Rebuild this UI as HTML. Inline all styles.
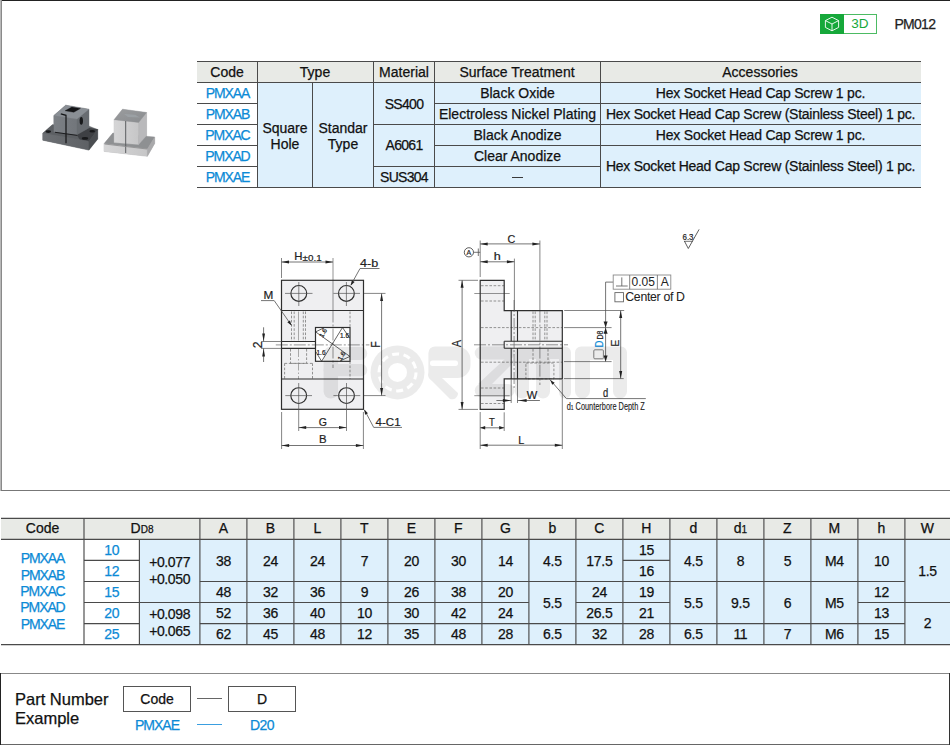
<!DOCTYPE html>
<html><head><meta charset="utf-8"><style>
html,body{margin:0;padding:0;background:#fff;}
body{width:950px;height:746px;position:relative;overflow:hidden;font-family:"Liberation Sans",sans-serif;}
body>div{position:absolute;}
.t{white-space:nowrap;-webkit-text-stroke:0.25px currentColor;}
</style></head><body>
<svg style="position:absolute;left:0;top:0" width="950" height="746" viewBox="0 0 950 746"><defs>
<linearGradient id="dkf" x1="0" y1="0" x2="1" y2="0"><stop offset="0" stop-color="#7c8085"/><stop offset="1" stop-color="#72767b"/></linearGradient>
<linearGradient id="dkfl" x1="0" y1="0" x2="1" y2="0"><stop offset="0" stop-color="#6c6f73"/><stop offset="1" stop-color="#5e6165"/></linearGradient>
<linearGradient id="ltf" x1="0" y1="0" x2="1" y2="0"><stop offset="0" stop-color="#d6d6d7"/><stop offset="1" stop-color="#c6c6c7"/></linearGradient>
<linearGradient id="ltt" x1="0" y1="0" x2="1" y2="1"><stop offset="0" stop-color="#9a9c9e"/><stop offset="1" stop-color="#8a8c8f"/></linearGradient>
</defs><polygon points="42.8,133.2 52.4,124.7 53.9,124.7 53.9,115.5 65.7,105.2 88.9,109.2 88.9,126 97.7,129.5 97.7,139.1 88.9,150.1 42.8,140.2" fill="#66696d" stroke="#66696d" stroke-width="0.3" stroke-linejoin="round"/><polygon points="42.8,133.2 52.4,124.7 97.7,129.5 88.9,141.3" fill="#5c5f63" stroke="#5c5f63" stroke-width="0.3" stroke-linejoin="round"/><polygon points="77,134.7 88.9,128 97.7,129.5 88.9,141.3 80,140" fill="#3e4044" stroke="#3e4044" stroke-width="0.3" stroke-linejoin="round"/><polygon points="42.8,133.2 88.9,141.3 88.9,150.1 42.8,140.2" fill="url(#dkfl)" stroke="url(#dkfl)" stroke-width="0.3" stroke-linejoin="round"/><polygon points="88.9,141.3 97.7,129.5 97.7,139.1 88.9,150.1" fill="#4a4d51" stroke="#4a4d51" stroke-width="0.3" stroke-linejoin="round"/><ellipse cx="48.3" cy="131.6" rx="2.8" ry="1.3" fill="#18191b"/><ellipse cx="92.2" cy="131.2" rx="2.8" ry="1.2" fill="#18191b"/><ellipse cx="85" cy="138.4" rx="3.2" ry="1.3" fill="#18191b"/><polygon points="53.9,115.5 77,119 77,134.7 53.9,131.7" fill="url(#dkf)" stroke="url(#dkf)" stroke-width="0.3" stroke-linejoin="round"/><polygon points="77,119 88.9,109.2 88.9,128 77,134.7" fill="#686c71" stroke="#686c71" stroke-width="0.3" stroke-linejoin="round"/><polygon points="53.9,115.5 65.7,105.2 88.9,109.2 77,119" fill="#8a8f95" stroke="#8a8f95" stroke-width="0.3" stroke-linejoin="round"/><polygon points="65,110.8 71.8,107 80.5,108.4 73.8,112.3" fill="#141517" stroke="#141517" stroke-width="0.3" stroke-linejoin="round"/><polyline points="60.8,113.9 66,115.3 66,143.2" fill="none" stroke="#141517" stroke-width="1.2"/><polyline points="55,132.3 77.3,135.4" fill="none" stroke="#1c1d1f" stroke-width="1"/><ellipse cx="81.3" cy="120.8" rx="1.7" ry="3.9" fill="#18191b"/><polygon points="104,143.8 112.9,133 114.1,133 114.1,119.7 122.5,109.2 146.6,112.5 146.6,137 154.7,137 154.7,143.4 147.4,156.3 104,151.4" fill="#b4b4b6" stroke="#b4b4b6" stroke-width="0.3" stroke-linejoin="round"/><polygon points="104,143.8 112.9,133 154.7,137 147.4,149" fill="#8e9092" stroke="#8e9092" stroke-width="0.3" stroke-linejoin="round"/><polygon points="104,143.8 147.4,149 147.4,156.3 104,151.4" fill="url(#ltf)" stroke="url(#ltf)" stroke-width="0.3" stroke-linejoin="round"/><polygon points="147.4,149 154.7,137 154.7,143.4 147.4,156.3" fill="#a9a9ab" stroke="#a9a9ab" stroke-width="0.3" stroke-linejoin="round"/><polygon points="114.1,119.7 138.6,122.5 138.6,144.6 114.1,142.6" fill="url(#ltf)" stroke="url(#ltf)" stroke-width="0.3" stroke-linejoin="round"/><polygon points="138.6,122.5 146.6,112.5 146.6,135.4 138.6,144.6" fill="#b9b9bb" stroke="#b9b9bb" stroke-width="0.3" stroke-linejoin="round"/><polygon points="114.1,119.7 122.5,109.2 146.6,112.5 138.6,122.5" fill="url(#ltt)" stroke="url(#ltt)" stroke-width="0.3" stroke-linejoin="round"/><polygon points="124,114 135,114.8 140,117.5 128,117" fill="#a2a8ae" opacity="0.6"/><line x1="125.7" y1="121" x2="125.7" y2="153" stroke="#5c5e60" stroke-width="1"/><polyline points="104.5,144 125.7,146.5 147,149" fill="none" stroke="#8a8a8c" stroke-width="0.8"/></svg>
<svg style="position:absolute;left:0;top:0" width="950" height="746" viewBox="0 0 950 746" font-family="Liberation Sans, sans-serif"><rect x="281.5" y="280.3" width="82" height="129" fill="#efeff1"/><rect x="315.5" y="327.5" width="34.5" height="33.8" fill="#fff"/><rect x="281.5" y="341.5" width="34" height="6.9" fill="#fafafa"/><line x1="291.5" y1="311.5" x2="291.5" y2="341" stroke="#7a7a7a" stroke-width="0.8" stroke-dasharray="2.6,1.6"/><line x1="294.2" y1="311.5" x2="294.2" y2="341" stroke="#7a7a7a" stroke-width="0.8" stroke-dasharray="2.6,1.6"/><line x1="303.3" y1="311.5" x2="303.3" y2="341" stroke="#7a7a7a" stroke-width="0.8" stroke-dasharray="2.6,1.6"/><line x1="305.5" y1="311.5" x2="305.5" y2="341" stroke="#7a7a7a" stroke-width="0.8" stroke-dasharray="2.6,1.6"/><line x1="298.5" y1="311.5" x2="298.5" y2="340.5" stroke="#777" stroke-width="0.6"/><line x1="298.5" y1="349" x2="298.5" y2="379" stroke="#777" stroke-width="0.6" stroke-dasharray="8,2,1.5,2"/><line x1="290.5" y1="349" x2="290.5" y2="363.4" stroke="#7a7a7a" stroke-width="0.8" stroke-dasharray="2.6,1.6"/><line x1="306.6" y1="349" x2="306.6" y2="363.4" stroke="#7a7a7a" stroke-width="0.8" stroke-dasharray="2.6,1.6"/><line x1="290.5" y1="363.4" x2="306.6" y2="363.4" stroke="#7a7a7a" stroke-width="0.8" stroke-dasharray="2.6,1.6"/><line x1="284.6" y1="363.4" x2="312.5" y2="363.4" stroke="#7a7a7a" stroke-width="0.8" stroke-dasharray="2.6,1.6"/><line x1="284.6" y1="363.4" x2="284.6" y2="379" stroke="#7a7a7a" stroke-width="0.8" stroke-dasharray="2.6,1.6"/><line x1="312.5" y1="363.4" x2="312.5" y2="379" stroke="#7a7a7a" stroke-width="0.8" stroke-dasharray="2.6,1.6"/><line x1="350" y1="311.5" x2="350" y2="327.5" stroke="#7a7a7a" stroke-width="0.8" stroke-dasharray="2.6,1.6"/><line x1="350" y1="361.3" x2="350" y2="379" stroke="#7a7a7a" stroke-width="0.8" stroke-dasharray="2.6,1.6"/><line x1="333" y1="258" x2="333" y2="310.5" stroke="#666" stroke-width="0.7"/><line x1="333" y1="310.5" x2="333" y2="368" stroke="#666" stroke-width="0.7" stroke-dasharray="12,2,2,2"/><line x1="275.8" y1="344.9" x2="369.4" y2="344.9" stroke="#666" stroke-width="0.7" stroke-dasharray="12,2,2,2"/><rect x="281.5" y="280.3" width="82" height="129" fill="none" stroke="#2e2e2e" stroke-width="1.2"/><line x1="281.5" y1="310.5" x2="363.5" y2="310.5" stroke="#2e2e2e" stroke-width="1.2"/><line x1="281.5" y1="379" x2="363.5" y2="379" stroke="#2e2e2e" stroke-width="1.2"/><line x1="281.5" y1="341.5" x2="315.5" y2="341.5" stroke="#2e2e2e" stroke-width="1.1"/><line x1="281.5" y1="348.4" x2="315.5" y2="348.4" stroke="#2e2e2e" stroke-width="1.1"/><rect x="315.5" y="327.5" width="34.5" height="33.8" fill="none" stroke="#2e2e2e" stroke-width="1.2"/><circle cx="298.8" cy="293.4" r="7.9" fill="none" stroke="#2e2e2e" stroke-width="1.15"/><circle cx="346.4" cy="293.4" r="7.9" fill="none" stroke="#2e2e2e" stroke-width="1.15"/><circle cx="298.7" cy="395.6" r="7.9" fill="none" stroke="#2e2e2e" stroke-width="1.15"/><circle cx="346.5" cy="395.6" r="7.9" fill="none" stroke="#2e2e2e" stroke-width="1.15"/><line x1="285" y1="293.4" x2="312.5" y2="293.4" stroke="#555" stroke-width="0.7"/><line x1="333.4" y1="293.4" x2="360" y2="293.4" stroke="#555" stroke-width="0.7"/><line x1="298.8" y1="282" x2="298.8" y2="306" stroke="#555" stroke-width="0.7"/><line x1="346.4" y1="282" x2="346.4" y2="306" stroke="#555" stroke-width="0.7"/><line x1="285.3" y1="395.6" x2="312" y2="395.6" stroke="#555" stroke-width="0.7"/><line x1="333.4" y1="395.6" x2="360.3" y2="395.6" stroke="#555" stroke-width="0.7"/><line x1="298.7" y1="383" x2="298.7" y2="431" stroke="#555" stroke-width="0.7"/><line x1="346.5" y1="383" x2="346.5" y2="431" stroke="#555" stroke-width="0.7"/><line x1="342.5" y1="327.5" x2="321.6" y2="361.3" stroke="#222" stroke-width="0.7"/><line x1="315.5" y1="331.8" x2="350" y2="356.5" stroke="#222" stroke-width="0.7"/><polyline points="315.8,331.8 324,327.8" fill="none" stroke="#222" stroke-width="0.7"/><polyline points="342.5,327.5 349.7,338" fill="none" stroke="#222" stroke-width="0.7"/><polyline points="316,352 321.6,361.3" fill="none" stroke="#222" stroke-width="0.7"/><polyline points="349.7,356.5 340,361" fill="none" stroke="#222" stroke-width="0.7"/><text x="325" y="334" font-size="6.5" text-anchor="middle" fill="#222" stroke="#222" stroke-width="0.2" transform="rotate(-60 325 334)">1.6</text><text x="344.5" y="337.5" font-size="6.5" text-anchor="middle" fill="#222" stroke="#222" stroke-width="0.2">1.6</text><text x="321" y="355" font-size="6.5" text-anchor="middle" fill="#222" stroke="#222" stroke-width="0.2">1.6</text><text x="343.5" y="357" font-size="6.5" text-anchor="middle" fill="#222" stroke="#222" stroke-width="0.2" transform="rotate(-60 343.5 357)">1.6</text><line x1="281.5" y1="258" x2="281.5" y2="278" stroke="#505050" stroke-width="0.7"/><line x1="281.5" y1="262" x2="333" y2="262" stroke="#505050" stroke-width="0.8"/><polygon points="281.5,262 289.00,260.50 289.00,263.50" fill="#222"/><polygon points="333,262 325.50,263.50 325.50,260.50" fill="#222"/><text x="294.3" y="260.3" font-size="11.5" text-anchor="start" fill="#222" stroke="#222" stroke-width="0.2" textLength="8.2" lengthAdjust="spacingAndGlyphs">H</text><text x="302.6" y="260.6" font-size="8.8" text-anchor="start" fill="#222" stroke="#222" stroke-width="0.2" textLength="19" lengthAdjust="spacingAndGlyphs">±0.1</text><text x="360.0" y="266.7" font-size="11.5" text-anchor="start" fill="#222" stroke="#222" stroke-width="0.2" textLength="18.2" lengthAdjust="spacingAndGlyphs">4-b</text><line x1="360" y1="268.5" x2="379.5" y2="268.5" stroke="#505050" stroke-width="0.8"/><line x1="360" y1="268.5" x2="350.8" y2="285.2" stroke="#505050" stroke-width="0.8"/><polygon points="350.8,285.5 351.81,280.35 354.61,281.89" fill="#222"/><text x="263.4" y="298.8" font-size="11.5" text-anchor="start" fill="#222" stroke="#222" stroke-width="0.2" textLength="9.8" lengthAdjust="spacingAndGlyphs">M</text><line x1="261" y1="300.6" x2="274.2" y2="300.6" stroke="#505050" stroke-width="0.8"/><line x1="274.2" y1="300.6" x2="291.5" y2="325.4" stroke="#505050" stroke-width="0.8"/><polygon points="291.5,325.4 287.33,322.21 289.95,320.38" fill="#222"/><line x1="261" y1="341.5" x2="281.5" y2="341.5" stroke="#505050" stroke-width="0.7"/><line x1="261" y1="348.4" x2="281.5" y2="348.4" stroke="#505050" stroke-width="0.7"/><line x1="263.6" y1="327.3" x2="263.6" y2="341.5" stroke="#505050" stroke-width="0.8"/><line x1="263.6" y1="348.4" x2="263.6" y2="362" stroke="#505050" stroke-width="0.8"/><polygon points="263.6,341.2 262.20,333.50 265.00,333.50" fill="#222"/><polygon points="263.6,348.7 265.00,356.40 262.20,356.40" fill="#222"/><text x="261.9" y="344.8" font-size="12.5" text-anchor="middle" fill="#222" stroke="#222" stroke-width="0.2" transform="rotate(-90 261.9 344.8)" textLength="6.8" lengthAdjust="spacingAndGlyphs">2</text><line x1="364" y1="293.4" x2="385.5" y2="293.4" stroke="#505050" stroke-width="0.7"/><line x1="364" y1="395.6" x2="385.5" y2="395.6" stroke="#505050" stroke-width="0.7"/><line x1="381.6" y1="293.4" x2="381.6" y2="395.6" stroke="#505050" stroke-width="0.8"/><polygon points="381.6,293.4 383.10,300.90 380.10,300.90" fill="#222"/><polygon points="381.6,395.6 380.10,388.10 383.10,388.10" fill="#222"/><text x="379.9" y="344.4" font-size="12" text-anchor="middle" fill="#222" stroke="#222" stroke-width="0.2" transform="rotate(-90 379.9 344.4)" textLength="6.2" lengthAdjust="spacingAndGlyphs">F</text><line x1="298.7" y1="427.6" x2="346.5" y2="427.6" stroke="#505050" stroke-width="0.8"/><polygon points="298.7,427.6 306.20,426.10 306.20,429.10" fill="#222"/><polygon points="346.5,427.6 339.00,429.10 339.00,426.10" fill="#222"/><text x="322.8" y="426" font-size="11" text-anchor="middle" fill="#222" stroke="#222" stroke-width="0.2" textLength="8.2" lengthAdjust="spacingAndGlyphs">G</text><line x1="281.6" y1="412" x2="281.6" y2="449" stroke="#505050" stroke-width="0.7"/><line x1="363.4" y1="412" x2="363.4" y2="449" stroke="#505050" stroke-width="0.7"/><line x1="281.6" y1="445.5" x2="363.4" y2="445.5" stroke="#505050" stroke-width="0.8"/><polygon points="281.6,445.5 289.10,444.00 289.10,447.00" fill="#222"/><polygon points="363.4,445.5 355.90,447.00 355.90,444.00" fill="#222"/><text x="322.9" y="443.4" font-size="11" text-anchor="middle" fill="#222" stroke="#222" stroke-width="0.2" textLength="7.6" lengthAdjust="spacingAndGlyphs">B</text><text x="375.6" y="426.4" font-size="11.5" text-anchor="start" fill="#222" stroke="#222" stroke-width="0.2" textLength="25" lengthAdjust="spacingAndGlyphs">4-C1</text><line x1="373.7" y1="427.4" x2="402" y2="427.4" stroke="#505050" stroke-width="0.8"/><line x1="373.7" y1="427.4" x2="364.5" y2="410" stroke="#505050" stroke-width="0.8"/><polygon points="364.2,409.6 367.95,413.27 365.12,414.77" fill="#222"/><polygon points="480.2,280.3 504.2,280.3 504.2,310.6 562.3,310.6 562.3,378.9 504.2,378.9 504.2,409.4 480.2,409.4" fill="#efeff1"/><rect x="504.2" y="341.3" width="58.1" height="6.9" fill="#f4f4f5"/><line x1="481" y1="285.7" x2="504" y2="285.7" stroke="#7a7a7a" stroke-width="0.8" stroke-dasharray="2.6,1.6"/><line x1="481" y1="301" x2="504" y2="301" stroke="#7a7a7a" stroke-width="0.8" stroke-dasharray="2.6,1.6"/><line x1="481" y1="388" x2="504" y2="388" stroke="#7a7a7a" stroke-width="0.8" stroke-dasharray="2.6,1.6"/><line x1="481" y1="403.5" x2="504" y2="403.5" stroke="#7a7a7a" stroke-width="0.8" stroke-dasharray="2.6,1.6"/><line x1="481" y1="327.6" x2="562" y2="327.6" stroke="#7a7a7a" stroke-width="0.8" stroke-dasharray="2.6,1.6"/><line x1="481" y1="362.2" x2="562" y2="362.2" stroke="#7a7a7a" stroke-width="0.8" stroke-dasharray="2.6,1.6"/><line x1="533" y1="311.5" x2="533" y2="341" stroke="#7a7a7a" stroke-width="0.8" stroke-dasharray="2.6,1.6"/><line x1="535.2" y1="311.5" x2="535.2" y2="341" stroke="#7a7a7a" stroke-width="0.8" stroke-dasharray="2.6,1.6"/><line x1="544.8" y1="311.5" x2="544.8" y2="341" stroke="#7a7a7a" stroke-width="0.8" stroke-dasharray="2.6,1.6"/><line x1="547" y1="311.5" x2="547" y2="341" stroke="#7a7a7a" stroke-width="0.8" stroke-dasharray="2.6,1.6"/><line x1="533" y1="349" x2="533" y2="363" stroke="#7a7a7a" stroke-width="0.8" stroke-dasharray="2.6,1.6"/><line x1="548" y1="349" x2="548" y2="363" stroke="#7a7a7a" stroke-width="0.8" stroke-dasharray="2.6,1.6"/><rect x="525.9" y="363" width="28" height="15.9" fill="none" stroke="#7a7a7a" stroke-width="0.8" stroke-dasharray="2.6,1.6"/><line x1="474.3" y1="293.5" x2="509.7" y2="293.5" stroke="#666" stroke-width="0.7"/><line x1="474.3" y1="395.7" x2="509.7" y2="395.7" stroke="#666" stroke-width="0.7"/><line x1="474" y1="344.8" x2="568" y2="344.8" stroke="#666" stroke-width="0.7" stroke-dasharray="12,2,2,2"/><line x1="514.1" y1="300" x2="514.1" y2="390" stroke="#666" stroke-width="0.7" stroke-dasharray="12,2,2,2"/><line x1="539.9" y1="240.5" x2="539.9" y2="310.6" stroke="#505050" stroke-width="0.7"/><line x1="539.9" y1="310.6" x2="539.9" y2="385" stroke="#666" stroke-width="0.7" stroke-dasharray="12,2,2,2"/><polygon points="480.2,280.3 504.2,280.3 504.2,310.6 562.3,310.6 562.3,378.9 504.2,378.9 504.2,409.4 480.2,409.4" fill="none" stroke="#2e2e2e" stroke-width="1.2"/><line x1="511.2" y1="310.6" x2="511.2" y2="341.3" stroke="#2e2e2e" stroke-width="1.1"/><line x1="511.2" y1="348.2" x2="511.2" y2="378.9" stroke="#2e2e2e" stroke-width="1.1"/><line x1="517.5" y1="310.6" x2="517.5" y2="341.3" stroke="#2e2e2e" stroke-width="1.1"/><line x1="517.5" y1="348.2" x2="517.5" y2="378.9" stroke="#2e2e2e" stroke-width="1.1"/><line x1="504.2" y1="341.3" x2="562.3" y2="341.3" stroke="#2e2e2e" stroke-width="1.1"/><line x1="504.2" y1="348.2" x2="562.3" y2="348.2" stroke="#2e2e2e" stroke-width="1.1"/><line x1="504.2" y1="341.3" x2="504.2" y2="348.2" stroke="#2e2e2e" stroke-width="1.1"/><line x1="511.2" y1="379" x2="511.2" y2="403" stroke="#505050" stroke-width="0.7"/><line x1="517.5" y1="379" x2="517.5" y2="403" stroke="#505050" stroke-width="0.7"/><line x1="480.2" y1="240.5" x2="480.2" y2="277" stroke="#505050" stroke-width="0.7"/><line x1="480.2" y1="243.9" x2="539.9" y2="243.9" stroke="#505050" stroke-width="0.8"/><polygon points="480.2,243.9 487.70,242.40 487.70,245.40" fill="#222"/><polygon points="539.9,243.9 532.40,245.40 532.40,242.40" fill="#222"/><text x="511.5" y="242.7" font-size="11" text-anchor="middle" fill="#222" stroke="#222" stroke-width="0.2" textLength="7.8" lengthAdjust="spacingAndGlyphs">C</text><line x1="514.4" y1="258.6" x2="514.4" y2="310.6" stroke="#505050" stroke-width="0.7"/><line x1="480.2" y1="261.8" x2="514.4" y2="261.8" stroke="#505050" stroke-width="0.8"/><polygon points="480.2,261.8 487.70,260.30 487.70,263.30" fill="#222"/><polygon points="514.4,261.8 506.90,263.30 506.90,260.30" fill="#222"/><text x="497.2" y="260.4" font-size="11.5" text-anchor="middle" fill="#222" stroke="#222" stroke-width="0.2" textLength="7" lengthAdjust="spacingAndGlyphs">h</text><circle cx="468.9" cy="252.3" r="4.6" fill="none" stroke="#333" stroke-width="0.8"/><text x="468.9" y="255.2" font-size="7" text-anchor="middle" fill="#222" stroke="#222" stroke-width="0.2">A</text><line x1="473.5" y1="252.3" x2="480.2" y2="252.3" stroke="#505050" stroke-width="0.8"/><line x1="478.3" y1="248.5" x2="478.3" y2="256" stroke="#505050" stroke-width="0.8"/><line x1="458.5" y1="280.3" x2="478" y2="280.3" stroke="#505050" stroke-width="0.7"/><line x1="458.5" y1="409.4" x2="478" y2="409.4" stroke="#505050" stroke-width="0.7"/><line x1="462.1" y1="280.3" x2="462.1" y2="409.4" stroke="#505050" stroke-width="0.8"/><polygon points="462.1,280.3 463.60,287.80 460.60,287.80" fill="#222"/><polygon points="462.1,409.4 460.60,401.90 463.60,401.90" fill="#222"/><text x="460.9" y="343.5" font-size="12.2" text-anchor="middle" fill="#222" stroke="#222" stroke-width="0.2" transform="rotate(-90 460.9 343.5)" textLength="7.4" lengthAdjust="spacingAndGlyphs">A</text><line x1="496.4" y1="400.5" x2="511.2" y2="400.5" stroke="#505050" stroke-width="0.8"/><polygon points="510.9,400.5 502.90,402.00 502.90,399.00" fill="#222"/><line x1="517.5" y1="400.5" x2="539.9" y2="400.5" stroke="#505050" stroke-width="0.8"/><polygon points="518.6,400.5 526.60,399.00 526.60,402.00" fill="#222"/><text x="532.0" y="398.5" font-size="11.5" text-anchor="middle" fill="#222" stroke="#222" stroke-width="0.2" textLength="10.5" lengthAdjust="spacingAndGlyphs">W</text><line x1="504.2" y1="412.3" x2="504.2" y2="431" stroke="#505050" stroke-width="0.7"/><line x1="480.2" y1="412" x2="480.2" y2="449" stroke="#505050" stroke-width="0.7"/><line x1="480.2" y1="427.8" x2="504.2" y2="427.8" stroke="#505050" stroke-width="0.8"/><polygon points="480.2,427.8 485.20,426.00 485.20,429.60" fill="#222"/><polygon points="504.2,427.8 499.20,429.60 499.20,426.00" fill="#222"/><text x="491.8" y="425.6" font-size="10.5" text-anchor="middle" fill="#222" stroke="#222" stroke-width="0.2" textLength="5.8" lengthAdjust="spacingAndGlyphs">T</text><line x1="562.3" y1="380" x2="562.3" y2="449" stroke="#505050" stroke-width="0.7"/><line x1="480.2" y1="445.2" x2="562.3" y2="445.2" stroke="#505050" stroke-width="0.8"/><polygon points="480.2,445.2 487.70,443.70 487.70,446.70" fill="#222"/><polygon points="562.3,445.2 554.80,446.70 554.80,443.70" fill="#222"/><text x="521.3" y="443.7" font-size="11" text-anchor="middle" fill="#222" stroke="#222" stroke-width="0.2" textLength="6" lengthAdjust="spacingAndGlyphs">L</text><line x1="550.2" y1="379.9" x2="566.4" y2="398.6" stroke="#505050" stroke-width="0.8"/><polygon points="550.2,379.9 554.68,382.63 552.26,384.73" fill="#222"/><line x1="566.4" y1="398.6" x2="645.8" y2="398.6" stroke="#505050" stroke-width="0.8"/><text x="605.6" y="396.8" font-size="12" text-anchor="middle" fill="#222" stroke="#222" stroke-width="0.2" textLength="5.2" lengthAdjust="spacingAndGlyphs">d</text><text x="566.7" y="410.5" font-size="11.8" fill="#222" stroke="#222" stroke-width="0.15" transform="translate(566.7 0) scale(0.625 1) translate(-566.7 0)">d<tspan font-size="8">1</tspan> Counterbore Depth Z</text><line x1="564.2" y1="310.5" x2="624.2" y2="310.5" stroke="#505050" stroke-width="0.7"/><line x1="564" y1="327.6" x2="611.6" y2="327.6" stroke="#505050" stroke-width="0.7"/><line x1="564" y1="361.6" x2="611.6" y2="361.6" stroke="#505050" stroke-width="0.7"/><line x1="564" y1="378.6" x2="623.7" y2="378.6" stroke="#505050" stroke-width="0.7"/><line x1="620.7" y1="310.5" x2="620.7" y2="378.6" stroke="#505050" stroke-width="0.8"/><polygon points="620.7,310.5 622.20,318.00 619.20,318.00" fill="#222"/><polygon points="620.7,378.6 619.20,371.10 622.20,371.10" fill="#222"/><text x="618.9" y="343.0" font-size="11.8" text-anchor="middle" fill="#222" stroke="#222" stroke-width="0.2" transform="rotate(-90 618.9 343.0)" textLength="6.8" lengthAdjust="spacingAndGlyphs">E</text><line x1="605.6" y1="282.1" x2="613.2" y2="282.1" stroke="#505050" stroke-width="0.8"/><line x1="605.6" y1="282.1" x2="605.6" y2="361.6" stroke="#505050" stroke-width="0.8"/><polygon points="605.6,327.6 603.60,321.60 607.60,321.60" fill="#222"/><polygon points="605.6,327.8 607.60,333.80 603.60,333.80" fill="#222"/><polygon points="605.6,361.6 603.60,355.60 607.60,355.60" fill="#222"/><text x="602.9" y="344.1" font-size="11.8" text-anchor="middle" fill="#0b8ad6" stroke="#0b8ad6" stroke-width="0.2" transform="rotate(-90 602.9 344.1)" textLength="7" lengthAdjust="spacingAndGlyphs">D</text><text x="602.9" y="335.1" font-size="8.3" text-anchor="middle" fill="#222" stroke="#222" stroke-width="0.2" transform="rotate(-90 602.9 335.1)" textLength="8.8" lengthAdjust="spacingAndGlyphs">D8</text><rect x="593.8" y="349.8" width="9.6" height="9" rx="1" fill="none" stroke="#777" stroke-width="0.9"/><rect x="613.2" y="275" width="57.6" height="14.2" fill="#fff" stroke="#8a8a8a" stroke-width="0.9"/><line x1="629.7" y1="275" x2="629.7" y2="289.2" stroke="#777" stroke-width="0.9"/><line x1="657.4" y1="275" x2="657.4" y2="289.2" stroke="#777" stroke-width="0.9"/><line x1="616" y1="286" x2="627.7" y2="286" stroke="#666" stroke-width="0.9"/><line x1="621.8" y1="277.4" x2="621.8" y2="286" stroke="#666" stroke-width="0.9"/><text x="643.2" y="286.3" font-size="12" text-anchor="middle" fill="#222" stroke="#222" stroke-width="0">0.05</text><text x="664.8" y="286.3" font-size="12" text-anchor="middle" fill="#222" stroke="#222" stroke-width="0">A</text><rect x="614.9" y="292.6" width="8.6" height="9.2" fill="none" stroke="#666" stroke-width="0.9"/><text x="625.3" y="301.4" font-size="12.3" text-anchor="start" fill="#222" stroke="#222" stroke-width="0.05" letter-spacing="-0.32">Center of D</text><polyline points="684.3,240.9 688.3,248.5 699.1,229.4" fill="none" stroke="#333" stroke-width="0.8"/><line x1="684.3" y1="241.3" x2="692.7" y2="241.3" stroke="#333" stroke-width="0.7"/><text x="688" y="240" font-size="8.5" text-anchor="middle" fill="#222" stroke="#222" stroke-width="0.2" textLength="11" lengthAdjust="spacingAndGlyphs">6.3</text><defs><mask id="wmO" maskUnits="userSpaceOnUse" x="0" y="0" width="950" height="746"><rect x="0" y="0" width="950" height="746" fill="#fff"/><circle cx="397.5" cy="372.4" r="9.5" fill="#000"/><circle cx="397.5" cy="372.4" r="18.5" fill="none" stroke="#000" stroke-width="3" stroke-dasharray="7,4.6"/><rect x="430" y="360.6" width="28" height="5.3" rx="2.6" fill="#000"/></mask></defs><g fill="#000" opacity="0.075" mask="url(#wmO)"><rect x="323.6" y="347" width="14.5" height="51.5" rx="7"/><rect x="323.6" y="347" width="43.7" height="13" rx="6.5"/><rect x="323.6" y="364" width="43.7" height="12.2" rx="6"/><circle cx="397.5" cy="372.4" r="27"/><path d="M435 346.4 H457 A13.5 13.5 0 0 1 470.5 359.9 V365 A13 13 0 0 1 457.5 378 H442 L458 393 A6 6 0 0 1 450 399 L432 381 A8 8 0 0 1 428.4 372 V353 A6.6 6.6 0 0 1 435 346.4 Z"/><rect x="474.7" y="346.5" width="40" height="13" rx="6.5"/><path d="M508 356 L514 362 L486 390 L478 384 Z"/><rect x="474.7" y="384" width="40" height="13" rx="6.5"/><path d="M521 346.5 H565 A6 6 0 0 1 571 352.5 V392.5 A6 6 0 0 1 559 392.5 V359 H550 V391.5 A7 7 0 0 1 536 391.5 V359 H529 V391.5 A7 7 0 0 1 515 391.5 V352.5 A6 6 0 0 1 521 346.5 Z"/><path d="M581 346.5 H621 A6 6 0 0 1 627 352.5 V391.5 A7 7 0 0 1 613 391.5 V360 H590 V391 A7.5 7.5 0 0 1 575 391 V352.5 A6 6 0 0 1 581 346.5 Z"/></g></svg>
<div style="left:0px;top:0px;width:950px;height:1px;background:#222"></div><div style="left:0px;top:0px;width:1px;height:491px;background:#b8b8b8"></div><div style="left:1px;top:0px;width:1px;height:491px;background:#8a8a8a"></div><div style="left:1px;top:490px;width:949px;height:1px;background:#777"></div><div style="left:820px;top:14px;width:57px;height:20px;box-sizing:border-box;border:1px solid #4cbb63;background:#fff"></div><div style="left:820px;top:14px;width:23.5px;height:20px;background:#16a83a"></div><svg style="position:absolute;left:824px;top:16px" width="16" height="16" viewBox="0 0 16 16"><g fill="none" stroke="#fff" stroke-width="0.9" stroke-linejoin="round"><path d="M8 1.2 L14.6 4.6 L14.6 11.4 L8 14.8 L1.4 11.4 L1.4 4.6 Z"/><path d="M1.4 4.6 L8 8 L14.6 4.6 M8 8 L8 14.8"/></g></svg><div class="t" style="left:559.8px;width:600px;text-align:center;top:16.97px;font-size:13.5px;line-height:13.5px;color:#16a83a;-webkit-text-stroke:0;">3D</div><div class="t" style="left:894.4px;top:16.75px;font-size:14px;line-height:14px;color:#222;letter-spacing:-0.7px;">PM012</div><div style="left:197px;top:61px;width:724px;height:21px;background:#e8eae6"></div><div style="left:258px;top:83px;width:663px;height:104px;background:#def0fc"></div><div style="left:197px;top:61px;width:724px;height:1px;background:#4a4a4a"></div><div style="left:197px;top:82px;width:724px;height:1px;background:#4a4a4a"></div><div style="left:197px;top:187px;width:724px;height:1px;background:#4a4a4a"></div><div style="left:257px;top:61px;width:1px;height:126px;background:#4a4a4a"></div><div style="left:373px;top:61px;width:1px;height:126px;background:#4a4a4a"></div><div style="left:434px;top:61px;width:1px;height:126px;background:#4a4a4a"></div><div style="left:600px;top:61px;width:1px;height:126px;background:#4a4a4a"></div><div style="left:312px;top:82px;width:1px;height:105px;background:#4a4a4a"></div><div style="left:197px;top:103px;width:60px;height:1px;background:#4a4a4a"></div><div style="left:197px;top:124px;width:60px;height:1px;background:#4a4a4a"></div><div style="left:197px;top:145px;width:60px;height:1px;background:#4a4a4a"></div><div style="left:197px;top:166px;width:60px;height:1px;background:#4a4a4a"></div><div style="left:373px;top:124px;width:61px;height:1px;background:#4a4a4a"></div><div style="left:373px;top:166px;width:61px;height:1px;background:#4a4a4a"></div><div style="left:434px;top:103px;width:166px;height:1px;background:#4a4a4a"></div><div style="left:434px;top:124px;width:166px;height:1px;background:#4a4a4a"></div><div style="left:434px;top:145px;width:166px;height:1px;background:#4a4a4a"></div><div style="left:434px;top:166px;width:166px;height:1px;background:#4a4a4a"></div><div style="left:600px;top:103px;width:321px;height:1px;background:#4a4a4a"></div><div style="left:600px;top:124px;width:321px;height:1px;background:#4a4a4a"></div><div style="left:600px;top:145px;width:321px;height:1px;background:#4a4a4a"></div><div class="t" style="left:-73px;width:600px;text-align:center;top:64.65px;font-size:14px;line-height:14px;color:#111;">Code</div><div class="t" style="left:15px;width:600px;text-align:center;top:64.65px;font-size:14px;line-height:14px;color:#111;">Type</div><div class="t" style="left:104px;width:600px;text-align:center;top:64.65px;font-size:14px;line-height:14px;color:#111;">Material</div><div class="t" style="left:217px;width:600px;text-align:center;top:64.65px;font-size:14px;line-height:14px;color:#111;">Surface Treatment</div><div class="t" style="left:460px;width:600px;text-align:center;top:64.65px;font-size:14px;line-height:14px;color:#111;">Accessories</div><div class="t" style="left:-72.5px;width:600px;text-align:center;top:86.15px;font-size:14px;line-height:14px;color:#0b8ad6;letter-spacing:-1.1px;">PMXAA</div><div class="t" style="left:-72.5px;width:600px;text-align:center;top:107.15px;font-size:14px;line-height:14px;color:#0b8ad6;letter-spacing:-1.1px;">PMXAB</div><div class="t" style="left:-72.5px;width:600px;text-align:center;top:128.15px;font-size:14px;line-height:14px;color:#0b8ad6;letter-spacing:-1.1px;">PMXAC</div><div class="t" style="left:-72.5px;width:600px;text-align:center;top:149.15px;font-size:14px;line-height:14px;color:#0b8ad6;letter-spacing:-1.1px;">PMXAD</div><div class="t" style="left:-72.5px;width:600px;text-align:center;top:170.15px;font-size:14px;line-height:14px;color:#0b8ad6;letter-spacing:-1.1px;">PMXAE</div><div class="t" style="left:-15px;width:600px;text-align:center;top:120.75px;font-size:14px;line-height:14px;color:#111;">Square</div><div class="t" style="left:-15px;width:600px;text-align:center;top:137.25px;font-size:14px;line-height:14px;color:#111;">Hole</div><div class="t" style="left:43px;width:600px;text-align:center;top:120.75px;font-size:14px;line-height:14px;color:#111;">Standar</div><div class="t" style="left:43px;width:600px;text-align:center;top:137.25px;font-size:14px;line-height:14px;color:#111;">Type</div><div class="t" style="left:104px;width:600px;text-align:center;top:96.95px;font-size:14px;line-height:14px;color:#111;letter-spacing:-0.7px;">SS400</div><div class="t" style="left:104px;width:600px;text-align:center;top:138.15px;font-size:14px;line-height:14px;color:#111;letter-spacing:-0.7px;">A6061</div><div class="t" style="left:104px;width:600px;text-align:center;top:170.15px;font-size:14px;line-height:14px;color:#111;letter-spacing:-0.7px;">SUS304</div><div class="t" style="left:217.5px;width:600px;text-align:center;top:86.15px;font-size:14px;line-height:14px;color:#111;">Black Oxide</div><div class="t" style="left:217.5px;width:600px;text-align:center;top:107.15px;font-size:14px;line-height:14px;color:#111;">Electroless Nickel Plating</div><div class="t" style="left:217.5px;width:600px;text-align:center;top:128.15px;font-size:14px;line-height:14px;color:#111;">Black Anodize</div><div class="t" style="left:217.5px;width:600px;text-align:center;top:149.15px;font-size:14px;line-height:14px;color:#111;">Clear Anodize</div><div style="left:512px;top:177px;width:11px;height:1.4px;background:#3a3a3a"></div><div class="t" style="left:460.5px;width:600px;text-align:center;top:86.15px;font-size:14px;line-height:14px;color:#111;letter-spacing:-0.2px;">Hex Socket Head Cap Screw 1 pc.</div><div class="t" style="left:460.5px;width:600px;text-align:center;top:107.15px;font-size:14px;line-height:14px;color:#111;letter-spacing:-0.25px;">Hex Socket Head Cap Screw (Stainless Steel) 1 pc.</div><div class="t" style="left:460.5px;width:600px;text-align:center;top:128.15px;font-size:14px;line-height:14px;color:#111;letter-spacing:-0.2px;">Hex Socket Head Cap Screw 1 pc.</div><div class="t" style="left:460.5px;width:600px;text-align:center;top:159.15px;font-size:14px;line-height:14px;color:#111;letter-spacing:-0.25px;">Hex Socket Head Cap Screw (Stainless Steel) 1 pc.</div><div style="left:1px;top:518px;width:949px;height:21px;background:#e8eae6"></div><div style="left:139.5px;top:539.5px;width:810.5px;height:105px;background:#def0fc"></div><svg style="position:absolute;left:0;top:0" width="950" height="746"><g stroke="#4a4a4a" stroke-width="1.15"><line x1="1" y1="518.30" x2="950" y2="518.30"/><line x1="1" y1="539.35" x2="950" y2="539.35"/><line x1="1" y1="644.60" x2="950" y2="644.60"/><line x1="84.00" y1="518.30" x2="84.00" y2="644.60"/><line x1="139.40" y1="539.35" x2="139.40" y2="644.60"/><line x1="199.90" y1="518.30" x2="199.90" y2="644.60"/><line x1="246.90" y1="518.30" x2="246.90" y2="644.60"/><line x1="293.90" y1="518.30" x2="293.90" y2="644.60"/><line x1="340.90" y1="518.30" x2="340.90" y2="644.60"/><line x1="387.90" y1="518.30" x2="387.90" y2="644.60"/><line x1="434.90" y1="518.30" x2="434.90" y2="644.60"/><line x1="481.90" y1="518.30" x2="481.90" y2="644.60"/><line x1="528.90" y1="518.30" x2="528.90" y2="644.60"/><line x1="575.90" y1="518.30" x2="575.90" y2="644.60"/><line x1="622.90" y1="518.30" x2="622.90" y2="644.60"/><line x1="669.90" y1="518.30" x2="669.90" y2="644.60"/><line x1="716.90" y1="518.30" x2="716.90" y2="644.60"/><line x1="763.90" y1="518.30" x2="763.90" y2="644.60"/><line x1="810.90" y1="518.30" x2="810.90" y2="644.60"/><line x1="857.90" y1="518.30" x2="857.90" y2="644.60"/><line x1="904.90" y1="518.30" x2="904.90" y2="644.60"/><line x1="84.0" y1="560.40" x2="139.4" y2="560.40"/><line x1="84.0" y1="581.45" x2="139.4" y2="581.45"/><line x1="84.0" y1="602.50" x2="139.4" y2="602.50"/><line x1="84.0" y1="623.55" x2="139.4" y2="623.55"/><line x1="139.4" y1="602.50" x2="199.9" y2="602.50"/><line x1="199.9" y1="581.45" x2="528.9" y2="581.45"/><line x1="199.9" y1="602.50" x2="528.9" y2="602.50"/><line x1="199.9" y1="623.55" x2="528.9" y2="623.55"/><line x1="528.9" y1="581.45" x2="575.9" y2="581.45"/><line x1="528.9" y1="623.55" x2="575.9" y2="623.55"/><line x1="575.9" y1="581.45" x2="622.9" y2="581.45"/><line x1="575.9" y1="602.50" x2="622.9" y2="602.50"/><line x1="575.9" y1="623.55" x2="622.9" y2="623.55"/><line x1="622.9" y1="560.40" x2="669.9" y2="560.40"/><line x1="622.9" y1="581.45" x2="669.9" y2="581.45"/><line x1="622.9" y1="602.50" x2="669.9" y2="602.50"/><line x1="622.9" y1="623.55" x2="669.9" y2="623.55"/><line x1="669.9" y1="581.45" x2="857.9" y2="581.45"/><line x1="669.9" y1="623.55" x2="857.9" y2="623.55"/><line x1="857.9" y1="581.45" x2="904.9" y2="581.45"/><line x1="857.9" y1="602.50" x2="904.9" y2="602.50"/><line x1="857.9" y1="623.55" x2="904.9" y2="623.55"/><line x1="904.9" y1="602.50" x2="950" y2="602.50"/></g></svg><div class="t" style="left:-257.5px;width:600px;text-align:center;top:521.35px;font-size:14px;line-height:14px;color:#111;">Code</div><div class="t" style="left:84px;width:116px;text-align:center;top:521.35px;font-size:14px;line-height:14px;color:#111">D<span style="font-size:10px">D8</span></div><div class="t" style="left:-76.6px;width:600px;text-align:center;top:521.35px;font-size:14px;line-height:14px;color:#111;">A</div><div class="t" style="left:-29.600000000000023px;width:600px;text-align:center;top:521.35px;font-size:14px;line-height:14px;color:#111;">B</div><div class="t" style="left:17.399999999999977px;width:600px;text-align:center;top:521.35px;font-size:14px;line-height:14px;color:#111;">L</div><div class="t" style="left:64.39999999999998px;width:600px;text-align:center;top:521.35px;font-size:14px;line-height:14px;color:#111;">T</div><div class="t" style="left:111.39999999999998px;width:600px;text-align:center;top:521.35px;font-size:14px;line-height:14px;color:#111;">E</div><div class="t" style="left:158.39999999999998px;width:600px;text-align:center;top:521.35px;font-size:14px;line-height:14px;color:#111;">F</div><div class="t" style="left:205.39999999999998px;width:600px;text-align:center;top:521.35px;font-size:14px;line-height:14px;color:#111;">G</div><div class="t" style="left:252.39999999999998px;width:600px;text-align:center;top:521.35px;font-size:14px;line-height:14px;color:#111;">b</div><div class="t" style="left:299.4px;width:600px;text-align:center;top:521.35px;font-size:14px;line-height:14px;color:#111;">C</div><div class="t" style="left:346.4px;width:600px;text-align:center;top:521.35px;font-size:14px;line-height:14px;color:#111;">H</div><div class="t" style="left:393.4px;width:600px;text-align:center;top:521.35px;font-size:14px;line-height:14px;color:#111;">d</div><div class="t" style="left:440.4px;width:600px;text-align:center;top:521.35px;font-size:14px;line-height:14px;color:#111;">d<span style="font-size:10px">1</span></div><div class="t" style="left:487.4px;width:600px;text-align:center;top:521.35px;font-size:14px;line-height:14px;color:#111;">Z</div><div class="t" style="left:534.4px;width:600px;text-align:center;top:521.35px;font-size:14px;line-height:14px;color:#111;">M</div><div class="t" style="left:581.4px;width:600px;text-align:center;top:521.35px;font-size:14px;line-height:14px;color:#111;">h</div><div class="t" style="left:627.45px;width:600px;text-align:center;top:521.35px;font-size:14px;line-height:14px;color:#111;">W</div><div class="t" style="left:-257.5px;width:600px;text-align:center;top:551.45px;font-size:14px;line-height:14px;color:#0b8ad6;letter-spacing:-1.1px;">PMXAA</div><div class="t" style="left:-257.5px;width:600px;text-align:center;top:567.75px;font-size:14px;line-height:14px;color:#0b8ad6;letter-spacing:-1.1px;">PMXAB</div><div class="t" style="left:-257.5px;width:600px;text-align:center;top:584.05px;font-size:14px;line-height:14px;color:#0b8ad6;letter-spacing:-1.1px;">PMXAC</div><div class="t" style="left:-257.5px;width:600px;text-align:center;top:600.35px;font-size:14px;line-height:14px;color:#0b8ad6;letter-spacing:-1.1px;">PMXAD</div><div class="t" style="left:-257.5px;width:600px;text-align:center;top:616.65px;font-size:14px;line-height:14px;color:#0b8ad6;letter-spacing:-1.1px;">PMXAE</div><div class="t" style="left:-188.3px;width:600px;text-align:center;top:543.05px;font-size:14px;line-height:14px;color:#0b8ad6;letter-spacing:-0.3px;">10</div><div class="t" style="left:-188.3px;width:600px;text-align:center;top:564.10px;font-size:14px;line-height:14px;color:#0b8ad6;letter-spacing:-0.3px;">12</div><div class="t" style="left:-188.3px;width:600px;text-align:center;top:585.15px;font-size:14px;line-height:14px;color:#0b8ad6;letter-spacing:-0.3px;">15</div><div class="t" style="left:-188.3px;width:600px;text-align:center;top:606.20px;font-size:14px;line-height:14px;color:#0b8ad6;letter-spacing:-0.3px;">20</div><div class="t" style="left:-188.3px;width:600px;text-align:center;top:627.25px;font-size:14px;line-height:14px;color:#0b8ad6;letter-spacing:-0.3px;">25</div><div class="t" style="left:-130.4px;width:600px;text-align:center;top:555.15px;font-size:14px;line-height:14px;color:#111;letter-spacing:-0.4px;">+0.077</div><div class="t" style="left:-130.4px;width:600px;text-align:center;top:571.75px;font-size:14px;line-height:14px;color:#111;letter-spacing:-0.4px;">+0.050</div><div class="t" style="left:-130.4px;width:600px;text-align:center;top:607.45px;font-size:14px;line-height:14px;color:#111;letter-spacing:-0.4px;">+0.098</div><div class="t" style="left:-130.4px;width:600px;text-align:center;top:623.65px;font-size:14px;line-height:14px;color:#111;letter-spacing:-0.4px;">+0.065</div><div class="t" style="left:-76.6px;width:600px;text-align:center;top:553.55px;font-size:14px;line-height:14px;color:#111;letter-spacing:-0.3px;">38</div><div class="t" style="left:-76.6px;width:600px;text-align:center;top:585.15px;font-size:14px;line-height:14px;color:#111;letter-spacing:-0.3px;">48</div><div class="t" style="left:-76.6px;width:600px;text-align:center;top:606.20px;font-size:14px;line-height:14px;color:#111;letter-spacing:-0.3px;">52</div><div class="t" style="left:-76.6px;width:600px;text-align:center;top:627.25px;font-size:14px;line-height:14px;color:#111;letter-spacing:-0.3px;">62</div><div class="t" style="left:-29.600000000000023px;width:600px;text-align:center;top:553.55px;font-size:14px;line-height:14px;color:#111;letter-spacing:-0.3px;">24</div><div class="t" style="left:-29.600000000000023px;width:600px;text-align:center;top:585.15px;font-size:14px;line-height:14px;color:#111;letter-spacing:-0.3px;">32</div><div class="t" style="left:-29.600000000000023px;width:600px;text-align:center;top:606.20px;font-size:14px;line-height:14px;color:#111;letter-spacing:-0.3px;">36</div><div class="t" style="left:-29.600000000000023px;width:600px;text-align:center;top:627.25px;font-size:14px;line-height:14px;color:#111;letter-spacing:-0.3px;">45</div><div class="t" style="left:17.399999999999977px;width:600px;text-align:center;top:553.55px;font-size:14px;line-height:14px;color:#111;letter-spacing:-0.3px;">24</div><div class="t" style="left:17.399999999999977px;width:600px;text-align:center;top:585.15px;font-size:14px;line-height:14px;color:#111;letter-spacing:-0.3px;">36</div><div class="t" style="left:17.399999999999977px;width:600px;text-align:center;top:606.20px;font-size:14px;line-height:14px;color:#111;letter-spacing:-0.3px;">40</div><div class="t" style="left:17.399999999999977px;width:600px;text-align:center;top:627.25px;font-size:14px;line-height:14px;color:#111;letter-spacing:-0.3px;">48</div><div class="t" style="left:64.39999999999998px;width:600px;text-align:center;top:553.55px;font-size:14px;line-height:14px;color:#111;letter-spacing:-0.3px;">7</div><div class="t" style="left:64.39999999999998px;width:600px;text-align:center;top:585.15px;font-size:14px;line-height:14px;color:#111;letter-spacing:-0.3px;">9</div><div class="t" style="left:64.39999999999998px;width:600px;text-align:center;top:606.20px;font-size:14px;line-height:14px;color:#111;letter-spacing:-0.3px;">10</div><div class="t" style="left:64.39999999999998px;width:600px;text-align:center;top:627.25px;font-size:14px;line-height:14px;color:#111;letter-spacing:-0.3px;">12</div><div class="t" style="left:111.39999999999998px;width:600px;text-align:center;top:553.55px;font-size:14px;line-height:14px;color:#111;letter-spacing:-0.3px;">20</div><div class="t" style="left:111.39999999999998px;width:600px;text-align:center;top:585.15px;font-size:14px;line-height:14px;color:#111;letter-spacing:-0.3px;">26</div><div class="t" style="left:111.39999999999998px;width:600px;text-align:center;top:606.20px;font-size:14px;line-height:14px;color:#111;letter-spacing:-0.3px;">30</div><div class="t" style="left:111.39999999999998px;width:600px;text-align:center;top:627.25px;font-size:14px;line-height:14px;color:#111;letter-spacing:-0.3px;">35</div><div class="t" style="left:158.39999999999998px;width:600px;text-align:center;top:553.55px;font-size:14px;line-height:14px;color:#111;letter-spacing:-0.3px;">30</div><div class="t" style="left:158.39999999999998px;width:600px;text-align:center;top:585.15px;font-size:14px;line-height:14px;color:#111;letter-spacing:-0.3px;">38</div><div class="t" style="left:158.39999999999998px;width:600px;text-align:center;top:606.20px;font-size:14px;line-height:14px;color:#111;letter-spacing:-0.3px;">42</div><div class="t" style="left:158.39999999999998px;width:600px;text-align:center;top:627.25px;font-size:14px;line-height:14px;color:#111;letter-spacing:-0.3px;">48</div><div class="t" style="left:205.39999999999998px;width:600px;text-align:center;top:553.55px;font-size:14px;line-height:14px;color:#111;letter-spacing:-0.3px;">14</div><div class="t" style="left:205.39999999999998px;width:600px;text-align:center;top:585.15px;font-size:14px;line-height:14px;color:#111;letter-spacing:-0.3px;">20</div><div class="t" style="left:205.39999999999998px;width:600px;text-align:center;top:606.20px;font-size:14px;line-height:14px;color:#111;letter-spacing:-0.3px;">24</div><div class="t" style="left:205.39999999999998px;width:600px;text-align:center;top:627.25px;font-size:14px;line-height:14px;color:#111;letter-spacing:-0.3px;">28</div><div class="t" style="left:252.39999999999998px;width:600px;text-align:center;top:553.55px;font-size:14px;line-height:14px;color:#111;letter-spacing:-0.3px;">4.5</div><div class="t" style="left:252.39999999999998px;width:600px;text-align:center;top:595.55px;font-size:14px;line-height:14px;color:#111;letter-spacing:-0.3px;">5.5</div><div class="t" style="left:252.39999999999998px;width:600px;text-align:center;top:627.25px;font-size:14px;line-height:14px;color:#111;letter-spacing:-0.3px;">6.5</div><div class="t" style="left:299.4px;width:600px;text-align:center;top:553.55px;font-size:14px;line-height:14px;color:#111;letter-spacing:-0.3px;">17.5</div><div class="t" style="left:299.4px;width:600px;text-align:center;top:585.15px;font-size:14px;line-height:14px;color:#111;letter-spacing:-0.3px;">24</div><div class="t" style="left:299.4px;width:600px;text-align:center;top:606.20px;font-size:14px;line-height:14px;color:#111;letter-spacing:-0.3px;">26.5</div><div class="t" style="left:299.4px;width:600px;text-align:center;top:627.25px;font-size:14px;line-height:14px;color:#111;letter-spacing:-0.3px;">32</div><div class="t" style="left:346.4px;width:600px;text-align:center;top:543.05px;font-size:14px;line-height:14px;color:#111;letter-spacing:-0.3px;">15</div><div class="t" style="left:346.4px;width:600px;text-align:center;top:564.10px;font-size:14px;line-height:14px;color:#111;letter-spacing:-0.3px;">16</div><div class="t" style="left:346.4px;width:600px;text-align:center;top:585.15px;font-size:14px;line-height:14px;color:#111;letter-spacing:-0.3px;">19</div><div class="t" style="left:346.4px;width:600px;text-align:center;top:606.20px;font-size:14px;line-height:14px;color:#111;letter-spacing:-0.3px;">21</div><div class="t" style="left:346.4px;width:600px;text-align:center;top:627.25px;font-size:14px;line-height:14px;color:#111;letter-spacing:-0.3px;">28</div><div class="t" style="left:393.4px;width:600px;text-align:center;top:553.55px;font-size:14px;line-height:14px;color:#111;letter-spacing:-0.3px;">4.5</div><div class="t" style="left:393.4px;width:600px;text-align:center;top:595.55px;font-size:14px;line-height:14px;color:#111;letter-spacing:-0.3px;">5.5</div><div class="t" style="left:393.4px;width:600px;text-align:center;top:627.25px;font-size:14px;line-height:14px;color:#111;letter-spacing:-0.3px;">6.5</div><div class="t" style="left:440.4px;width:600px;text-align:center;top:553.55px;font-size:14px;line-height:14px;color:#111;letter-spacing:-0.3px;">8</div><div class="t" style="left:440.4px;width:600px;text-align:center;top:595.55px;font-size:14px;line-height:14px;color:#111;letter-spacing:-0.3px;">9.5</div><div class="t" style="left:440.4px;width:600px;text-align:center;top:627.25px;font-size:14px;line-height:14px;color:#111;letter-spacing:-0.3px;">11</div><div class="t" style="left:487.4px;width:600px;text-align:center;top:553.55px;font-size:14px;line-height:14px;color:#111;letter-spacing:-0.3px;">5</div><div class="t" style="left:487.4px;width:600px;text-align:center;top:595.55px;font-size:14px;line-height:14px;color:#111;letter-spacing:-0.3px;">6</div><div class="t" style="left:487.4px;width:600px;text-align:center;top:627.25px;font-size:14px;line-height:14px;color:#111;letter-spacing:-0.3px;">7</div><div class="t" style="left:534.4px;width:600px;text-align:center;top:553.55px;font-size:14px;line-height:14px;color:#111;letter-spacing:-0.3px;">M4</div><div class="t" style="left:534.4px;width:600px;text-align:center;top:595.55px;font-size:14px;line-height:14px;color:#111;letter-spacing:-0.3px;">M5</div><div class="t" style="left:534.4px;width:600px;text-align:center;top:627.25px;font-size:14px;line-height:14px;color:#111;letter-spacing:-0.3px;">M6</div><div class="t" style="left:581.4px;width:600px;text-align:center;top:553.55px;font-size:14px;line-height:14px;color:#111;letter-spacing:-0.3px;">10</div><div class="t" style="left:581.4px;width:600px;text-align:center;top:585.15px;font-size:14px;line-height:14px;color:#111;letter-spacing:-0.3px;">12</div><div class="t" style="left:581.4px;width:600px;text-align:center;top:606.20px;font-size:14px;line-height:14px;color:#111;letter-spacing:-0.3px;">13</div><div class="t" style="left:581.4px;width:600px;text-align:center;top:627.25px;font-size:14px;line-height:14px;color:#111;letter-spacing:-0.3px;">15</div><div class="t" style="left:627.45px;width:600px;text-align:center;top:563.55px;font-size:14px;line-height:14px;color:#111;letter-spacing:-0.3px;">1.5</div><div class="t" style="left:627.45px;width:600px;text-align:center;top:616.05px;font-size:14px;line-height:14px;color:#111;letter-spacing:-0.3px;">2</div><div style="left:0px;top:673px;width:950px;height:1px;background:#888"></div><div style="left:0px;top:744px;width:950px;height:1px;background:#666"></div><div style="left:0px;top:673px;width:1px;height:72px;background:#222"></div><div style="left:949px;top:673px;width:1px;height:72px;background:#333"></div><div class="t" style="left:15px;top:691.33px;font-size:16.5px;line-height:16.5px;color:#111;">Part Number</div><div class="t" style="left:15px;top:710.03px;font-size:16.5px;line-height:16.5px;color:#111;">Example</div><div style="left:123px;top:686px;width:68px;height:26px;box-sizing:border-box;border:1px solid #555"></div><div style="left:228px;top:686px;width:68px;height:26px;box-sizing:border-box;border:1px solid #555"></div><div class="t" style="left:-143px;width:600px;text-align:center;top:692.15px;font-size:14px;line-height:14px;color:#111;">Code</div><div class="t" style="left:-38px;width:600px;text-align:center;top:692.15px;font-size:14px;line-height:14px;color:#111;">D</div><div style="left:197px;top:698px;width:25px;height:1px;background:#666"></div><div style="left:197px;top:724px;width:25px;height:1px;background:#3a9ee0"></div><div class="t" style="left:-143px;width:600px;text-align:center;top:717.65px;font-size:14px;line-height:14px;color:#0b8ad6;letter-spacing:-1.0px;">PMXAE</div><div class="t" style="left:-38px;width:600px;text-align:center;top:717.65px;font-size:14px;line-height:14px;color:#0b8ad6;letter-spacing:-0.5px;">D20</div>
</body></html>
